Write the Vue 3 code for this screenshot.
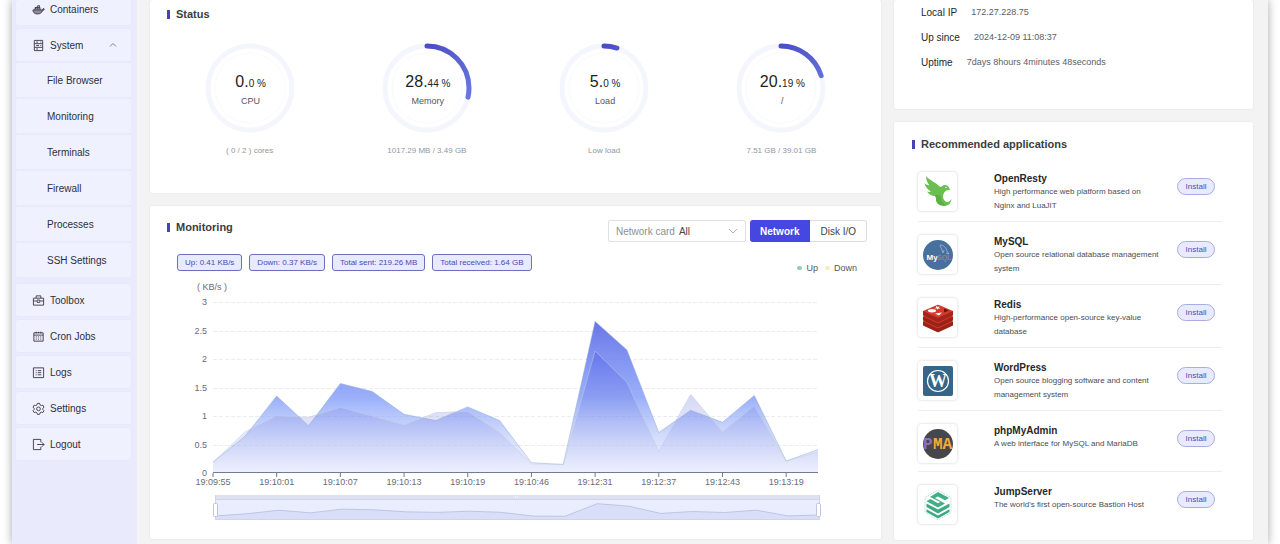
<script setup>
import { ref } from 'vue'

const subItems = ['File Browser', 'Monitoring', 'Terminals', 'Firewall', 'Processes', 'SSH Settings']
const lowerItems = [
  { name: 'Toolbox', icon: 'toolbox' },
  { name: 'Cron Jobs', icon: 'calendar' },
  { name: 'Logs', icon: 'logs' },
  { name: 'Settings', icon: 'settings' },
  { name: 'Logout', icon: 'logout' },
]

const RADIUS = 42
const LENGTH = 2 * Math.PI * RADIUS
const gauges = [
  { whole: '0.', rest: '0 %', label: 'CPU', note: '( 0 / 2 ) cores', value: 0 },
  { whole: '28.', rest: '44 %', label: 'Memory', note: '1017.29 MB / 3.49 GB', value: 0.2844 },
  { whole: '5.', rest: '0 %', label: 'Load', note: 'Low load', value: 0.05 },
  { whole: '20.', rest: '19 %', label: '/', note: '7.51 GB / 39.01 GB', value: 0.2019 },
]
const dash = (v) => `${v * LENGTH} ${LENGTH}`

const tags = ['Up: 0.41 KB/s', 'Down: 0.37 KB/s', 'Total sent: 219.26 MB', 'Total received: 1.64 GB']
const mode = ref('Network')
const card = ref('All')

const up = [0.19, 0.64, 1.35, 0.83, 1.57, 1.43, 1.03, 0.92, 1.16, 0.92, 0.18, 0.15, 2.66, 2.16, 0.71, 1.1, 0.89, 1.36, 0.21, 0.41]
const down = [0.19, 0.72, 1.0, 0.98, 1.15, 1.0, 0.84, 1.06, 1.08, 0.71, 0.16, 0.15, 2.14, 1.59, 0.38, 1.38, 0.72, 1.18, 0.21, 0.37]
const times = ['19:09:55', '19:10:01', '19:10:07', '19:10:13', '19:10:19', '19:10:46', '19:12:31', '19:12:37', '19:12:43', '19:13:19']
const levels = [3, 2.5, 2, 1.5, 1, 0.5, 0]

const plot = { left: 63, right: 668, top: 29, bottom: 200 }
const px = (i) => plot.left + (i * (plot.right - plot.left)) / (up.length - 1)
const py = (v) => plot.bottom - (v * (plot.bottom - plot.top)) / 3
const line = (s) => s.map((v, i) => `${px(i)},${py(v)}`).join(' ')
const area = (s) => `${plot.left},${plot.bottom} ${line(s)} ${plot.right},${plot.bottom}`
const miniLine = up.map((v, i) => `${px(i) + 2},${244 - v * 5}`).join(' ')
const miniArea = `65,247 ${miniLine} 670,247`

const info = [
  ['Local IP', '172.27.228.75'],
  ['Up since', '2024-12-09 11:08:37'],
  ['Uptime', '7days 8hours 4minutes 48seconds'],
]
const apps = [
  { name: 'OpenResty', logo: 'openresty', text: 'High performance web platform based on Nginx and LuaJIT' },
  { name: 'MySQL', logo: 'mysql', text: 'Open source relational database management system' },
  { name: 'Redis', logo: 'redis', text: 'High-performance open-source key-value database' },
  { name: 'WordPress', logo: 'wordpress', text: 'Open source blogging software and content management system' },
  { name: 'phpMyAdmin', logo: 'pma', text: 'A web interface for MySQL and MariaDB' },
  { name: 'JumpServer', logo: 'jumpserver', text: "The world's first open-source Bastion Host" },
]
</script>

<template>
  <div class="window">
    <nav class="sidebar">
      <a class="item cut" href="#">
        <svg class="icon" viewBox="0 0 14 14">
          <path d="M1 7.5h9.6c1 0 1.500-.5 1.500-1.500 .8.1 1.200.5 1.200.9-.4.7-1 .9-1.900.9-.7 2.700-2.500 4-5.600 4C2.800 11.800 1.200 10.300 1 7.500z" fill="#8a8c98" />
          <path d="M2 6.500h8M3 4.800h6M6 3h2.500M3.800 4.500v2M5.800 3v3.500M7.800 3v3.500" />
        </svg>
        <span>Containers</span>
      </a>
      <button class="item" type="button" aria-expanded="true">
        <svg class="icon" viewBox="0 0 14 14">
          <path d="M2.500 1.500h9v11h-9zM2.500 5h9M2.500 9h9M4.500 3.300h2M4.500 7h3M4.500 10.800h2M9 7h1M9 3.300h1" />
        </svg>
        <span>System</span>
        <svg class="chevron" viewBox="0 0 8 8"><path d="M1 5.500 4 2.500 7 5.500" /></svg>
      </button>
      <div class="submenu">
        <a v-for="s in subItems" :key="s" class="sub" href="#">{{ s }}</a>
      </div>
      <a v-for="m in lowerItems" :key="m.name" class="item" href="#">
        <svg class="icon" viewBox="0 0 14 14">
          <path v-if="m.icon === 'toolbox'" d="M1.500 4.500h11v7.500h-11zM4.500 4.500v-2.500h5v2.500M1.500 7.500h3.500M9 7.500h3.500M5.500 6.500h3v2.500h-3z" />
          <path v-else-if="m.icon === 'calendar'" d="M2 3h10v9H2zM2 5.500h10M4.500 1.800v2M9.500 1.800v2M4 7.500h1.200M6.400 7.500h1.200M8.800 7.500h1.200M4 9.800h1.200M6.400 9.800h1.200M8.800 9.800h1.200M7 2v1.500" />
          <path v-else-if="m.icon === 'logs'" d="M1.500 2h11v10.500h-11zM4 5h1M6.200 5h3.800M4 7.200h1M6.200 7.200h3.800M4 9.500h1M6.200 9.500h3.800" />
          <g v-else-if="m.icon === 'settings'">
            <path d="M5.800 1.500h2.400l.5 1.700 1.300.7 1.700-.5 1.200 2.100-1.200 1.200v1.400l1.200 1.200-1.200 2.100-1.700-.5-1.300.7-.5 1.700H5.800l-.5-1.700-1.300-.7-1.700.5-1.200-2.100 1.200-1.200V6.700L1.100 5.500l1.200-2.100 1.700.5 1.300-.7z" />
            <circle cx="7" cy="7.400" r="2" />
          </g>
          <path v-else d="M9.500 4.500V1.500H1.500v11h8V9.500M5.500 7h7.500M10.500 4.500 13 7l-2.500 2.500" />
        </svg>
        <span>{{ m.name }}</span>
      </a>
    </nav>

    <main class="content">
      <div class="column">
        <section class="card status">
          <h2>Status</h2>
          <div class="gauges">
            <div v-for="(g, i) in gauges" :key="g.label" class="gauge">
              <div class="dial">
                <svg viewBox="0 0 90 90" class="ring">
                  <defs>
                    <linearGradient :id="'ring' + i" gradientUnits="userSpaceOnUse" x1="90" y1="40" x2="45" y2="90">
                      <stop offset="0" stop-color="#4a49c4" />
                      <stop offset="1" stop-color="#6676dc" />
                    </linearGradient>
                  </defs>
                  <circle cx="45" cy="45" :r="RADIUS" fill="none" stroke="#f5f6fd" stroke-width="5" />
                  <circle cx="45" cy="45" r="35" fill="none" stroke="#fafaff" stroke-width="1" />
                  <circle v-if="g.value" cx="45" cy="45" :r="RADIUS" fill="none" :stroke="`url(#ring${i})`" stroke-width="5" stroke-linecap="round" :stroke-dasharray="dash(g.value)" transform="rotate(-90 45 45)" />
                </svg>
                <div class="reading">
                  <div class="number"><span class="whole">{{ g.whole }}</span>{{ g.rest }}</div>
                  <div class="label">{{ g.label }}</div>
                </div>
              </div>
              <div class="note">{{ g.note }}</div>
            </div>
          </div>
        </section>

        <section class="card monitor">
          <header class="monitor-head">
            <h2>Monitoring</h2>
            <div class="picker">
              <label for="netcard">Network card</label>
              <select id="netcard" v-model="card"><option>All</option></select>
              <svg class="chevron" viewBox="0 0 8 8"><path d="M0 2l4 4 4-4" /></svg>
            </div>
            <div class="segment">
              <button v-for="m in ['Network', 'Disk I/O']" :key="m" type="button" :class="{ on: mode === m }" @click="mode = m">{{ m }}</button>
            </div>
          </header>
          <div class="tags">
            <span v-for="t in tags" :key="t" class="tag">{{ t }}</span>
            <div class="legend">
              <span><i class="dot green"></i>Up</span>
              <span><i class="dot yellow"></i>Down</span>
            </div>
          </div>
          <svg class="chart" viewBox="0 0 731 266">
            <defs>
              <linearGradient id="upFill" x1="0" y1="0" x2="0" y2="1">
                <stop offset="0" stop-color="#5866e4" stop-opacity="0.9" />
                <stop offset="0.5" stop-color="#7290f8" stop-opacity="0.72" />
                <stop offset="1" stop-color="#d5defb" stop-opacity="0.3" />
              </linearGradient>
              <linearGradient id="downFill" x1="0" y1="0" x2="0" y2="1">
                <stop offset="0" stop-color="#4a5cec" stop-opacity="0.45" />
                <stop offset="0.45" stop-color="#6a74dc" stop-opacity="0.24" />
                <stop offset="1" stop-color="#dfe4fa" stop-opacity="0.3" />
              </linearGradient>
            </defs>
            <text x="47" y="17" class="axis">( KB/s )</text>
            <g v-for="v in levels" :key="v">
              <line v-if="v" :x1="plot.left" :x2="plot.right" :y1="Math.round(py(v)) + 0.5" :y2="Math.round(py(v)) + 0.5" stroke="#ebecef" stroke-dasharray="4 2" />
              <text x="57" :y="py(v) + 3" text-anchor="end" class="axis">{{ v }}</text>
            </g>
            <polygon :points="area(up)" fill="url(#upFill)" />
            <polygon :points="area(down)" fill="url(#downFill)" />
            <polyline :points="line(up)" fill="none" stroke="#8ea9d2" stroke-opacity="0.5" />
            <polyline :points="line(down)" fill="none" stroke="#c3cddd" stroke-opacity="0.5" />
            <line :x1="plot.left" :x2="plot.right" y1="199.5" y2="199.5" stroke="#747b8f" />
            <g v-for="(t, i) in times" :key="t">
              <line :x1="px(i * 2)" :x2="px(i * 2)" y1="200" y2="204" stroke="#747b8f" />
              <text :x="px(i * 2)" y="212" text-anchor="middle" class="axis">{{ t }}</text>
            </g>
            <rect x="65" y="222" width="605" height="25" fill="#e9edfd" />
            <rect x="65" y="222" width="605" height="4" fill="#dfe1f1" />
            <polygon :points="miniArea" fill="#dadff9" />
            <polyline :points="miniLine" fill="none" stroke="#bec5e6" />
            <path d="M65.5 222v25M669.5 222v25M65 246.5h605M65 226.5h605" stroke="#cdd4ef" fill="none" />
            <path d="M365 224h4" stroke="#fff" stroke-dasharray="1 1" />
            <rect x="63.5" y="230.5" width="4" height="13" rx="1" fill="#fff" stroke="#c0c4d8" />
            <rect x="666.5" y="230.5" width="4" height="13" rx="1" fill="#fff" stroke="#c0c4d8" />
          </svg>
        </section>
      </div>

      <div class="column">
        <section class="card info">
          <dl>
            <div v-for="r in info" :key="r[0]"><dt>{{ r[0] }}</dt><dd>{{ r[1] }}</dd></div>
          </dl>
        </section>
        <section class="card apps">
          <h2>Recommended applications</h2>
          <ul>
            <li v-for="a in apps" :key="a.name">
              <div class="logo">
                <svg viewBox="0 0 32 32">
                  <g v-if="a.logo === 'openresty'">
                    <path d="M4 0c3 4 9 6 13 10 1 1 2 1 3 .2 1.500-1.500 4.500-1.500 6 0 1 1 1.500 2 2 4-2-.8-4 0-5.500 2-2 2.600-2 6.500.5 8.800 2 1.800 5 .8 6.500-2-.3 4.500-3.500 7-7.500 7-5 0-8.500-3-8-7.500-.2-1.500-.5-2-1-2.500-3 0-6-1.500-8-4.500 1.500.5 3 .5 4 0C5.500 13.500 3.500 11 2.500 7.500c1.500 1.200 3.500 1.800 5 1.800C5.500 7 4 4 4 0z" fill="#6abf50" />
                    <path d="M13 19c4-1 6 1 6 4 1 3 2.500 5 5 6.500-5.500.5-10.500-2-10-7z" fill="#4d9f3d" opacity=".5" />
                    <circle cx="24" cy="11.500" r=".7" fill="#fff" />
                  </g>
                  <g v-else-if="a.logo === 'mysql'">
                    <circle cx="16" cy="16" r="15" fill="#48709f" />
                    <text x="4.500" y="21" class="logo-my">My</text>
                    <text x="15" y="21" class="logo-sql">SQL</text>
                    <path d="M18 6c4 0 6 3 7 6l2 3-3-1M18 6l2 5 1 3 1-3" fill="none" stroke="#9cb8d0" stroke-width=".8" />
                  </g>
                  <g v-else-if="a.logo === 'redis'">
                    <path d="M1 19.500v4L15 30q1 .5 2 0l14-6.500v-4z" fill="#9c2117" />
                    <path d="M1 19.500 16 13l15 6.500L17 26q-1 .5-2 0z" fill="#d13c2e" />
                    <path d="M1 14.500v4L15 25q1 .5 2 0l14-6.500v-4z" fill="#9c2117" />
                    <path d="M1 14.500 16 8l15 6.500L17 21q-1 .5-2 0z" fill="#d13c2e" />
                    <path d="M1 9v4.500L15 20q1 .5 2 0l14-6.500V9z" fill="#a62419" />
                    <path d="M1 9 15 3q1-.5 2 0l14 6-14 6.500q-1 .5-2 0z" fill="#d13c2e" />
                    <path d="M14 4l1.500.8 2-.3-.6 1.100 1.500.8-2 .2-.8 1-.9-1-1.900-.2 1.300-.8z" fill="#fff" />
                    <ellipse cx="10" cy="8.800" rx="4" ry="1.700" fill="#fff" />
                    <path d="M13 11.500 20 10.500l-3 3z" fill="#fff" />
                    <path d="M22 6.500 27 8.600l-5 2z" fill="#6d130c" />
                  </g>
                  <g v-else-if="a.logo === 'wordpress'">
                    <rect x="1" y="1" width="30" height="30" rx="2" fill="#356687" />
                    <circle cx="16" cy="16" r="10.500" fill="none" stroke="#fff" stroke-width="1.200" />
                    <text x="16" y="22" text-anchor="middle" class="logo-w">W</text>
                  </g>
                  <g v-else-if="a.logo === 'pma'">
                    <circle cx="16" cy="16" r="15" fill="#47474b" />
                    <text x="1" y="21" class="logo-pma" fill="#8e6fc6">P</text>
                    <text x="11" y="21" class="logo-pma" fill="#f3a93c">MA</text>
                  </g>
                  <g v-else>
                    <path d="M16 1 29 8.500v15L16 31 3 23.500v-15z" fill="none" stroke="#9bd9c3" stroke-width=".7" stroke-dasharray="2 1" />
                    <path d="M16 3 27 9l-4 2.200-7-3.700-3 1.600 10 5.400L16 18.500 4.500 12.200l3.800-2.100 7.700 4.200 2.300-1.200L8 8z" fill="#43ad88" />
                    <path d="M4.500 14.500 16 20.500l11.500-6v3.500L16 24.500 4.500 18z" fill="#3fa983" />
                    <path d="M4.500 20.200 16 26.400l11.500-6.200v2.800L16 29.500 4.500 23z" fill="#3fa983" />
                  </g>
                </svg>
              </div>
              <div class="about">
                <h3>{{ a.name }}</h3>
                <p>{{ a.text }}</p>
              </div>
              <button type="button" class="install">Install</button>
            </li>
          </ul>
        </section>
      </div>
    </main>
  </div>
</template>

<style>
body {
  background: #fff;
}
</style>

<style scoped>
* {
  box-sizing: border-box;
}
.window {
  display: flex;
  min-height: 100vh;
  margin: 0 12px;
  background: #f3f3f4;
  box-shadow: 0 0 9px rgba(0, 0, 0, 0.35);
  font-family: "Liberation Sans", Arial, sans-serif;
  font-size: 10px;
  color: #33353c;
}
h2,
h3,
p,
ul,
dl,
dd {
  margin: 0;
  padding: 0;
}
button,
select {
  font-family: inherit;
}
.sidebar {
  flex: 0 0 125px;
  padding: 0 6px 0 4px;
  background: #e9ebfd;
}
.item {
  display: flex;
  align-items: center;
  gap: 5px;
  width: 100%;
  height: 32px;
  margin-bottom: 4px;
  padding: 0 14px 0 16px;
  border: 0;
  border-radius: 2px;
  background: #f0f1fe;
  box-shadow: 0 0 2px #dcdff5;
  color: #2d2f3a;
  font-size: 10px;
  text-decoration: none;
}
.cut {
  height: 25px;
  padding-bottom: 7px;
}
.icon {
  width: 13px;
  height: 13px;
  fill: none;
  stroke: #3c3e4a;
  stroke-width: 1;
}
.chevron {
  width: 8px;
  height: 8px;
  margin-left: auto;
  fill: none;
  stroke: #80828e;
}
.submenu {
  display: grid;
  gap: 2px;
  margin: -2px 0 7px;
}
.sub {
  display: flex;
  align-items: center;
  height: 34px;
  padding-left: 31px;
  border-radius: 2px;
  background: #f0f1fe;
  color: #2d2f3a;
  text-decoration: none;
}
.content {
  flex: 1;
  display: grid;
  grid-template-columns: 731fr 359fr;
  align-items: start;
  gap: 13px;
  padding: 0 15px 0 13px;
}
.column {
  display: grid;
  gap: 13px;
  min-width: 0;
}
.card {
  background: #fff;
  border-radius: 2px;
  box-shadow: 0 0 2px #dedee2;
}
h2 {
  display: flex;
  align-items: center;
  gap: 6px;
  font-size: 11px;
  font-weight: 700;
  line-height: 14px;
  color: #3b3d42;
}
h2::before {
  content: "";
  width: 3px;
  height: 9px;
  background: #4743b4;
}
.status {
  padding: 7px 11px 36px;
}
.status h2 {
  padding-left: 6px;
}
.gauges {
  display: grid;
  grid-template-columns: repeat(4, 1fr);
  padding-top: 22px;
}
.gauge {
  text-align: center;
}
.dial {
  display: grid;
  justify-content: center;
}
.ring,
.reading {
  grid-area: 1 / 1;
}
.ring {
  width: 90px;
  height: 90px;
}
.reading {
  padding: 29px 0 0 2px;
}
.number {
  font-size: 10px;
  line-height: 20px;
  color: #1d1e22;
}
.whole {
  font-size: 16px;
}
.label {
  font-size: 9px;
  line-height: 14px;
  color: #55575e;
}
.note {
  padding-top: 12px;
  font-size: 8px;
  line-height: 12px;
  color: #94969d;
}
.monitor {
  padding-top: 14px;
}
.monitor-head {
  display: flex;
  align-items: flex-start;
  padding: 0 14px 0 17px;
}
.monitor-head h2 {
  margin-right: auto;
}
.picker {
  display: flex;
  align-items: center;
  width: 138px;
  height: 22px;
  margin-right: 4px;
  padding: 0 8px 0 7px;
  border: 1px solid #dfe0e6;
  border-radius: 2px;
}
.picker label {
  margin-right: 4px;
  color: #8d8f96;
}
.picker select {
  appearance: none;
  flex: 1;
  min-width: 0;
  padding: 0;
  border: 0;
  background: none;
  color: #44464d;
  font-size: 10px;
}
.picker .chevron {
  stroke: #b0b2b9;
}
.segment {
  display: flex;
  height: 22px;
}
.segment button {
  padding: 0 10px;
  border: 1px solid #dcdde2;
  border-left: 0;
  border-radius: 0 3px 3px 0;
  background: #fff;
  color: #3f4147;
  font-size: 10px;
}
.segment button:first-child {
  border-radius: 3px 0 0 3px;
}
.segment .on {
  border-color: #4646e0;
  background: #4646e0;
  color: #fff;
  font-weight: 700;
}
.tags {
  display: flex;
  align-items: flex-start;
  gap: 7px;
  padding: 12px 24px 0 27px;
}
.tag {
  padding: 0 7px;
  border: 1px solid #6c6fc0;
  border-radius: 3px;
  background: #e8eafd;
  color: #4a49ba;
  font-size: 8px;
  line-height: 15px;
  white-space: nowrap;
}
.legend {
  display: flex;
  gap: 7px;
  margin: 9px 0 0 auto;
  font-size: 9px;
  line-height: 10px;
  color: #55575e;
}
.legend span {
  display: flex;
  align-items: center;
  gap: 4px;
}
.dot {
  width: 5px;
  height: 4px;
  border-radius: 2px;
}
.green {
  background: #91cfae;
}
.yellow {
  background: #eff0bb;
}
.chart {
  display: block;
  width: 100%;
}
.axis {
  font-size: 9px;
  fill: #696c78;
}
.info {
  padding: 0 27px 34px;
}
.info dl > div {
  display: flex;
  gap: 14px;
  line-height: 25px;
}
.info dt {
  color: #24262b;
}
.info dd {
  font-size: 9px;
  color: #5c5e66;
}
.apps {
  padding: 15px 31px 16px 18px;
}
.apps ul {
  padding: 8px 0 0 6px;
  list-style: none;
}
.apps li {
  display: flex;
  align-items: flex-start;
  padding: 13px 7px 8px 0;
  border-bottom: 1px solid #ededf0;
}
.apps li:last-child {
  padding-bottom: 0;
  border-bottom: 0;
}
.logo {
  display: grid;
  place-items: center;
  width: 39px;
  height: 39px;
  margin-right: 37px;
  border-radius: 4px;
  background: #fff;
  box-shadow: 0 0 3px #cfcfd4;
}
.logo svg {
  width: 32px;
  height: 32px;
}
.logo-my {
  font-size: 8px;
  font-weight: 700;
  fill: #fff;
}
.logo-sql {
  font-size: 7px;
  font-weight: 700;
  fill: #8d8583;
}
.logo-w {
  font-family: "Liberation Serif", serif;
  font-size: 18px;
  font-weight: 700;
  fill: #fff;
}
.logo-pma {
  font-family: "Liberation Mono", monospace;
  font-size: 16px;
  font-weight: 700;
}
.about {
  flex: 1;
  padding-right: 16px;
}
h3 {
  font-size: 10px;
  font-weight: 700;
  line-height: 13px;
  color: #25272c;
}
.about p {
  font-size: 8px;
  line-height: 14px;
  color: #4b4d54;
}
.install {
  width: 38px;
  height: 17px;
  margin-top: 6px;
  padding: 0;
  border: 1px solid #a9acdf;
  border-radius: 9px;
  background: #e8eafd;
  color: #4b4abf;
  font-size: 8px;
}
</style>
